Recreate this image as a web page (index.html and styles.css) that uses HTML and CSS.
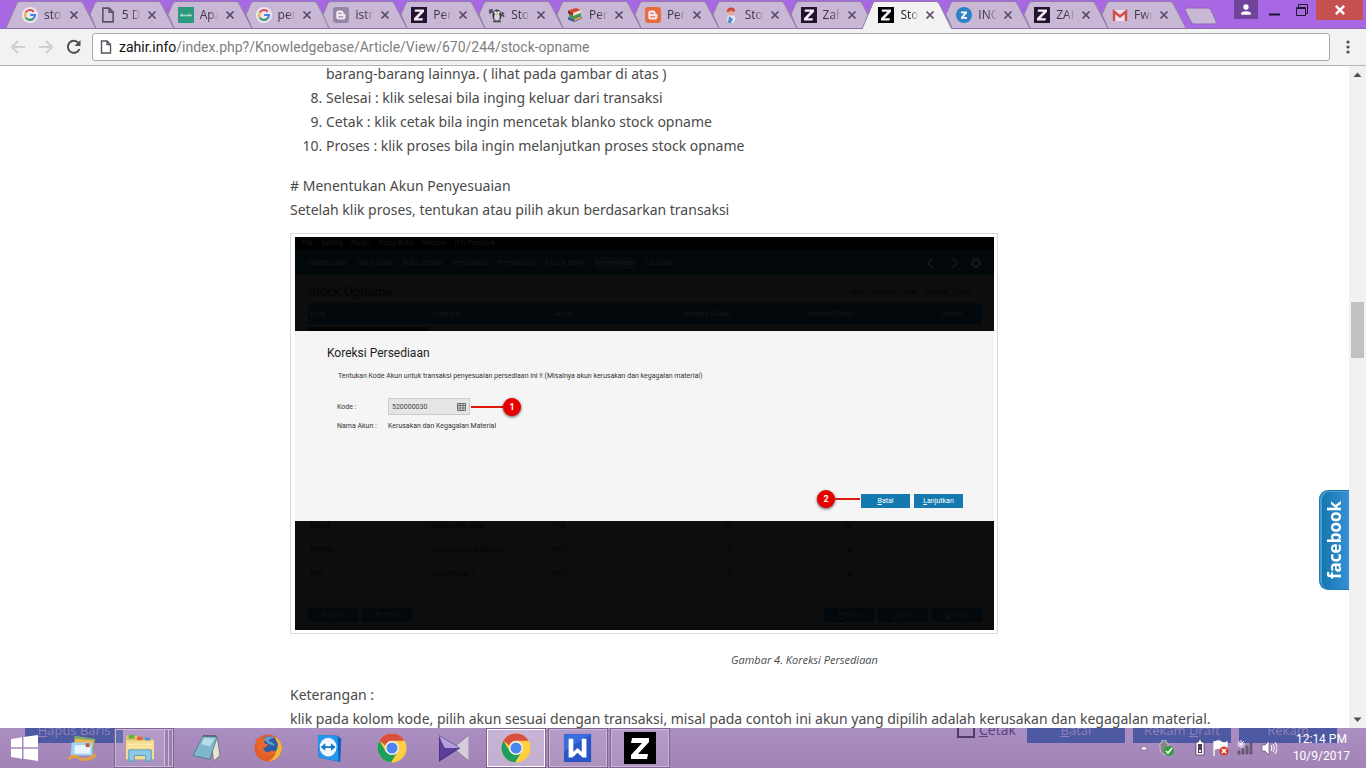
FILE: index.html
```html
<!DOCTYPE html>
<html lang="id">
  <head>
    <meta charset="UTF-8" />
    <meta name="viewport" content="width=device-width, initial-scale=1.0" />
    <title>Stock Opname - Zahir</title>
    <link rel="stylesheet" href="styles.css">
  </head>
  <body>
    <!-- shared icons -->
    <svg class="defs" aria-hidden="true">
      <symbol id="tab-full" viewBox="0 0 90 28" preserveAspectRatio="none"><path d="M0 28L11 3Q12 1.500 14 1.500H74Q76 1.500 77 3L90 28"/></symbol>
      <symbol id="tab-cut" viewBox="0 0 90 28" preserveAspectRatio="none"><path d="M12 28L6 14.500L11 3Q12 1.500 14 1.500H74Q76 1.500 77 3L90 28"/></symbol>
      <symbol id="i-close" viewBox="0 0 10 10"><path d="M1.500 1.500l7 7M8.500 1.500l-7 7" fill="none" stroke="#54496b" stroke-width="1.700"/></symbol>
      <symbol id="i-google" viewBox="0 0 16 16"><circle cx="8" cy="8" r="8" fill="#eee6f4"/><g fill="none" stroke-width="2.200"><path d="M3.700 5.500A5 5 0 0 1 11.800 4.700" stroke="#d9534a"/><path d="M3.700 5.500A5 5 0 0 0 3.700 10.500" stroke="#e8b832"/><path d="M3.700 10.500A5 5 0 0 0 11.300 11.700" stroke="#3d9f65"/><path d="M11.300 11.700A5 5 0 0 0 13 8H8.200" stroke="#4a80dc"/></g></symbol>
      <symbol id="i-page" viewBox="0 0 12 14"><path d="M1.500 1h5.500l3.500 3.500V13h-9zM7 1v3.500h3.500" fill="none" stroke="#5b5360" stroke-width="1.400"/></symbol>
      <symbol id="i-sleekr" viewBox="0 0 16 16"><path d="M0 0h16v16H0z" fill="#2c9a7c"/><path d="M2 8.500h12M4 6.500v3M11 6.500v3" stroke="#a5d8c9" stroke-width="1.300"/></symbol>
      <symbol id="i-blogger" viewBox="0 0 16 16"><rect width="16" height="16" rx="3"/><path d="M5.600 3.500h2.600a2.300 2.300 0 0 1 2.300 2.300c0 1 .4 1.200 1.900 1.200v3a2.500 2.500 0 0 1-2.500 2.500H5.600a2.300 2.300 0 0 1-2.300-2.300V5.800a2.300 2.300 0 0 1 2.300-2.300z" fill="#f3eaf4"/><path d="M5.800 6.300h2.400M5.800 9.800h4" stroke="currentColor" stroke-width="1.300" stroke-linecap="round"/></symbol>
      <symbol id="i-zahir" viewBox="0 0 16 16"><path d="M0 0h16v16H0z"/><path d="M4 2.500h9v2.200L6.700 11.300H12l-.6 2.200H3v-2.200l6.300-6.600H3.600z" fill="#f4edfa"/></symbol>
      <symbol id="i-penguin" viewBox="0 0 16 16"><ellipse cx="8" cy="8.500" rx="4.500" ry="6" fill="#333"/><ellipse cx="8" cy="10" rx="2.800" ry="3.700" fill="#d8d8e0"/><circle cx="6.500" cy="5.500" r="1.300" fill="#fff"/><circle cx="9.500" cy="5.500" r="1.300" fill="#fff"/><path d="M7 7.500h2l-1 1z" fill="#dca032"/><path d="M1 2v5M3 2v4M0 4.500h4M13 5l2 5M12 9l3-3M4 14.500h8" stroke="#4c4553" stroke-width="1.400"/></symbol>
      <symbol id="i-books" viewBox="0 0 16 16"><path d="M1 3.500L9 1l5 2-8 3z" fill="#d8462d"/><path d="M1 3.500L6 6v3L1 6.500z" fill="#8b2b22"/><path d="M6 6l8-3v3L6 9z" fill="#e9e2d0"/><path d="M2 7l4 2 8-3v3l-8 3-4-2z" fill="#3f9b48"/><path d="M1 10l5 2 8-3 1 2.500L7 15l-6-2.500z" fill="#335f9c"/><path d="M7 12l7-2.500v2L7 14z" fill="#e8a83e"/></symbol>
      <symbol id="i-worker" viewBox="0 0 16 16"><path d="M4 4a4 3.500 0 0 1 8 0l-1 1H3.500z" fill="#cf4632"/><ellipse cx="8" cy="6" rx="2.600" ry="2.600" fill="#e3a582"/><path d="M5 8.500h6l1.500 3-2 4.500H6l-2-3z" fill="#e8edf4"/><path d="M6 9l4 3-2 4H5z" fill="#4c8dd0"/></symbol>
      <symbol id="i-ring" viewBox="0 0 16 16"><circle cx="8" cy="8" r="8" fill="#2f82c4"/><path d="M5 4.500h6v1.500L7.500 10H11v1.800H5v-1.500l3.500-4H5z" fill="#fff"/></symbol>
      <symbol id="i-gmail" viewBox="0 0 16 16"><path d="M1 3h14v11H1z" fill="#e9e1ee"/><path d="M2 14V4.500l6 5 6-5V14" fill="none" stroke="#d54b3f" stroke-width="2.400"/></symbol>
      <symbol id="i-chrome" viewBox="0 0 30 30"><circle cx="15" cy="15" r="14.500" fill="#ffcf40"/><path d="M2.400 7.800A14.500 14.500 0 0 1 27.600 7.800H15a7.200 7.200 0 0 0-6.600 4.800z" fill="#d9503f"/><path d="M2.400 7.800A14.500 14.500 0 0 0 14 29.500l6.300-10.300a7.200 7.200 0 0 1-11.500-.6z" fill="#1e9f5e"/><circle cx="15" cy="15" r="7" fill="#f2f2f2"/><circle cx="15" cy="15" r="5.500" fill="#4a86ee"/></symbol>
    </svg>

    <header class="titlebar">
      <nav class="tabs">
        <div class="tab"><svg class="shape"><use href="#tab-full"/></svg><svg class="fav"><use href="#i-google"/></svg><a href="#">sto</a><button aria-label="Close"><svg><use href="#i-close"/></svg></button></div>
        <div class="tab"><svg class="shape"><use href="#tab-cut"/></svg><svg class="fav"><use href="#i-page"/></svg><a href="#">5 D</a><button aria-label="Close"><svg><use href="#i-close"/></svg></button></div>
        <div class="tab"><svg class="shape"><use href="#tab-cut"/></svg><svg class="fav"><use href="#i-sleekr"/></svg><a href="#">Apa</a><button aria-label="Close"><svg><use href="#i-close"/></svg></button></div>
        <div class="tab"><svg class="shape"><use href="#tab-cut"/></svg><svg class="fav"><use href="#i-google"/></svg><a href="#">per</a><button aria-label="Close"><svg><use href="#i-close"/></svg></button></div>
        <div class="tab"><svg class="shape"><use href="#tab-cut"/></svg><svg class="fav grey"><use href="#i-blogger"/></svg><a href="#">istri</a><button aria-label="Close"><svg><use href="#i-close"/></svg></button></div>
        <div class="tab"><svg class="shape"><use href="#tab-cut"/></svg><svg class="fav dark"><use href="#i-zahir"/></svg><a href="#">Per</a><button aria-label="Close"><svg><use href="#i-close"/></svg></button></div>
        <div class="tab"><svg class="shape"><use href="#tab-cut"/></svg><svg class="fav"><use href="#i-penguin"/></svg><a href="#">Sto</a><button aria-label="Close"><svg><use href="#i-close"/></svg></button></div>
        <div class="tab"><svg class="shape"><use href="#tab-cut"/></svg><svg class="fav"><use href="#i-books"/></svg><a href="#">Per</a><button aria-label="Close"><svg><use href="#i-close"/></svg></button></div>
        <div class="tab"><svg class="shape"><use href="#tab-cut"/></svg><svg class="fav orange"><use href="#i-blogger"/></svg><a href="#">Per</a><button aria-label="Close"><svg><use href="#i-close"/></svg></button></div>
        <div class="tab"><svg class="shape"><use href="#tab-cut"/></svg><svg class="fav"><use href="#i-worker"/></svg><a href="#">Sto</a><button aria-label="Close"><svg><use href="#i-close"/></svg></button></div>
        <div class="tab"><svg class="shape"><use href="#tab-cut"/></svg><svg class="fav dark"><use href="#i-zahir"/></svg><a href="#">Zah</a><button aria-label="Close"><svg><use href="#i-close"/></svg></button></div>
        <div class="tab active"><svg class="shape"><use href="#tab-full"/></svg><svg class="fav"><use href="#i-zahir"/></svg><a href="#">Sto</a><button aria-label="Close"><svg><use href="#i-close"/></svg></button></div>
        <div class="tab"><svg class="shape"><use href="#tab-cut"/></svg><svg class="fav"><use href="#i-ring"/></svg><a href="#">INC</a><button aria-label="Close"><svg><use href="#i-close"/></svg></button></div>
        <div class="tab"><svg class="shape"><use href="#tab-cut"/></svg><svg class="fav dark"><use href="#i-zahir"/></svg><a href="#">ZAH</a><button aria-label="Close"><svg><use href="#i-close"/></svg></button></div>
        <div class="tab"><svg class="shape"><use href="#tab-cut"/></svg><svg class="fav"><use href="#i-gmail"/></svg><a href="#">Fwd</a><button aria-label="Close"><svg><use href="#i-close"/></svg></button></div>
      </nav>
      <button class="new-tab" aria-label="New tab"><svg viewBox="0 0 34 18"><path d="M3 1h21q2 0 3 2l5 11q1 3-1 3H10q-2 0-3-2L1 3q-1-2 2-2z" fill="#c8b8d5" stroke="#8a68ad"/></svg></button>
      <div class="window-controls">
        <button class="profile" aria-label="Profile"><svg viewBox="0 0 10 10"><circle cx="5" cy="2.500" r="2.200"/><path d="M1 9V7.500Q1.500 6 5 6t4 1.500V9z"/></svg></button>
        <button class="minimize" aria-label="Minimize"><svg viewBox="0 0 12 12"><path d="M0 10.500h11" stroke="#1f1630" stroke-width="2"/></svg></button>
        <button class="restore" aria-label="Restore"><svg viewBox="0 0 12 12"><path d="M.5 3.500h9v8h-9zM0 4.500h10M2.500 3V.5h9v9H10" fill="none" stroke="#1f1630"/></svg></button>
        <button class="close" aria-label="Close window"><svg viewBox="0 0 10 10"><path d="M1.500 1.500l7 7M8.500 1.500l-7 7" stroke="#fff" stroke-width="2"/></svg></button>
      </div>
    </header>

    <div class="toolbar">
      <button aria-label="Back"><svg viewBox="0 0 16 16"><path d="M15 8H2.500M8 2L2 8l6 6" stroke="#d0d0d0"/></svg></button>
      <button aria-label="Forward"><svg viewBox="0 0 16 16"><path d="M1 8h12.500M8 2l6 6-6 6" stroke="#d0d0d0"/></svg></button>
      <button aria-label="Reload"><svg viewBox="0 0 16 16"><path d="M13.500 10A6 6 0 1 1 12.500 4" stroke="#505050"/><path d="M14.500 1v6h-6z" fill="#505050"/></svg></button>
      <div class="address">
        <svg><use href="#i-page"/></svg>
        <a href="#">zahir.info<span>/index.php?/Knowledgebase/Article/View/670/244/stock-opname</span></a>
      </div>
      <button class="menu" aria-label="Menu"><svg viewBox="0 0 16 16"><circle cx="8" cy="3" r="1.600"/><circle cx="8" cy="8" r="1.600"/><circle cx="8" cy="13" r="1.600"/></svg></button>
    </div>

    <div class="viewport">
      <main>
        <article>
          <ol start="8">
            <li class="continued">barang-barang lainnya. ( lihat pada gambar di atas )</li>
            <li value="8">Selesai : klik selesai bila inging keluar dari transaksi</li>
            <li>Cetak : klik cetak bila ingin mencetak blanko stock opname</li>
            <li>Proses : klik proses bila ingin melanjutkan proses stock opname</li>
          </ol>
          <p># Menentukan Akun Penyesuaian<br>Setelah klik proses, tentukan atau pilih akun berdasarkan transaksi</p>

          <figure>
            <div class="app">
              <div class="app-top">
                <div class="app-menu"><span>File</span><span>Setting</span><span>Plugin</span><span>Tutup Buku</span><span>Window</span><span>[F1] Petunjuk</span></div>
                <div class="app-nav">
                  <span>Dashboard</span><span>Data-Data</span><span>Buku Besar</span><span>Penjualan</span><span>Pembelian</span><span>Kas &amp; Bank</span><span class="current">Persediaan</span><span>Laporan</span>
                  <svg viewBox="0 0 58 12"><path d="M8 1L3 6l5 5M27 1l5 5-5 5" fill="none" stroke="#15191c" stroke-width="1.500"/><circle cx="51" cy="6" r="3.500" fill="none" stroke="#15191c" stroke-width="2"/><circle cx="51" cy="6" r="4.800" fill="none" stroke="#15191c" stroke-dasharray="2 1.800"/></svg>
                </div>
                <div class="app-title"><h2>Stock Opname</h2><div><span>Atas</span><span>Gudang</span><span>Cari</span><span>Update</span><span>Filter</span></div></div>
                <table class="app-head">
                  <tr><th>Kode</th><th>Deskripsi</th><th>Satuan</th><th>Tersedia (Buku)</th><th>Tersedia (Fisik)</th><th>Selisih</th></tr>
                </table>
                <div class="app-cell"></div>
              </div>

              <section class="dialog">
                <h3>Koreksi Persediaan</h3>
                <p>Tentukan Kode Akun untuk transaksi penyesuaian persediaan ini !! (Misalnya akun kerusakan dan kegagalan material)</p>
                <div class="field">
                  <label for="kode">Kode :</label>
                  <div class="kode-box">
                    <input type="text" id="kode" value="520000030">
                    <svg viewBox="0 0 9 8"><path d="M.5.5h8v7h-8zM0 2.500h9M0 5h9M3 0v8M6 0v8" fill="#ddd" stroke="#555" stroke-width=".8"/></svg>
                  </div>
                  <i class="line"></i><b class="marker">1</b>
                </div>
                <div class="field"><span class="name">Nama Akun :</span><span>Kerusakan dan Kegagalan Material</span></div>
                <div class="actions"><b class="marker">2</b><i class="line"></i><button><u>B</u>atal</button><button><u>L</u>anjutkan</button></div>
              </section>

              <div class="app-bottom">
                <table>
                  <tr><td>Kms-5</td><td>Kamus Bhs. Arab</td><td>PCS</td><td>20</td><td>20</td><td></td></tr>
                  <tr><td>PKT-K5</td><td>Paket Kamus 5 Bahasa</td><td>PKT</td><td>0</td><td>0</td><td></td></tr>
                  <tr><td>PP1</td><td>Paket Pintar 1</td><td>PKT</td><td>0</td><td>0</td><td></td></tr>
                </table>
                <div class="app-buttons"><button>Reset =</button><button>Reset 0</button><button class="push"><u>P</u>roses</button><button><u>C</u>etak</button><button><u>S</u>elesai</button></div>
              </div>
            </div>
          </figure>
          <p class="caption">Gambar 4. Koreksi Persediaan</p>

          <p>Keterangan :<br>klik pada kolom kode, pilih akun sesuai dengan transaksi, misal pada contoh ini akun yang dipilih adalah kerusakan dan kegagalan material.</p>
        </article>
        <a class="facebook" href="#"><span>facebook</span></a>
      </main>
      <div class="scrollbar">
        <svg viewBox="0 0 17 17"><path d="M4.500 11l4-4.500 4 4.500z"/></svg>
        <div class="thumb"></div>
        <svg viewBox="0 0 17 17"><path d="M4.500 6.500l4 4.500 4-4.500z"/></svg>
      </div>
    </div>

    <footer class="taskbar">
      <!-- window that shows through the glass -->
      <div class="ghost">
        <span class="ghost-btn"><u>H</u>apus Baris</span>
        <i class="ghost-box"></i><span class="ghost-label"><u>C</u>etak</span>
        <span class="ghost-btn"><u>B</u>atal</span><span class="ghost-btn">Rekam <u>D</u>raft</span><span class="ghost-btn">Reka<u>m</u></span>
      </div>
      <button class="start" aria-label="Start"><svg viewBox="0 0 28 26"><path d="M0 4l11-1.700v10H0zM12.500 2.100L27 0v12.300H12.500zM0 13.700h11v10L0 22zM12.500 13.700H27V26l-14.500-2.200z" fill="#fff"/></svg></button>
      <button class="task" aria-label="Mail"><svg viewBox="0 0 32 30"><path d="M8 2l22 3-3 17-21-4z" fill="#7fa965"/><path d="M9 5l20 2-3 15-19-3z" fill="#edb454"/><path d="M5 9l22 0v14H4z" fill="#9fd3f1"/><path d="M8 12h17v9H8z" fill="#e8f6fc"/><path d="M20 10h4v4h-4z" fill="#c4523b"/><path d="M1 25q7-6 13 0 8 3 16-5l1 4q-9 7-17 4-6-5-11 0z" fill="#e2a144"/></svg></button>
      <button class="task open stack" aria-label="File Explorer"><svg viewBox="0 0 32 30"><path d="M1 2h12l2 3h15v22H1z" fill="#e5bf68"/><path d="M4 1h6v4H4z" fill="#61b239"/><path d="M13 3h6v4h-6z" fill="#e06440"/><path d="M21 4h6v4h-6z" fill="#4b94cf"/><path d="M1 7h30v20H1z" fill="#f6dc92"/><path d="M3 11h26M3 14h26" stroke="#fff0bb"/><path d="M4 29V17h24v12h-6v-6H10v6z" fill="#8fcae4" stroke="#4e9cc2"/></svg></button>
      <button class="task" aria-label="Notepad"><svg viewBox="0 0 32 30"><path d="M21 3l7 1 3 19-7 6z" fill="#e7e3d8" stroke="#7c7768"/><path d="M13 2l15 1-8 24-18-4z" fill="#7fb8cc" stroke="#537c90"/><path d="M14 4l11 1-5 8-9-2z" fill="#b8dce6"/><path d="M13 2h15" stroke="#545454" stroke-width="2" stroke-dasharray="2 1"/></svg></button>
      <button class="task" aria-label="Firefox"><svg viewBox="0 0 32 30"><circle cx="16" cy="15" r="14.500" fill="#e25e28"/><path d="M24 3q8 6 6.500 14.500Q28 28 17 29.500 26 23 25 12z" fill="#f3b639"/><circle cx="17" cy="12" r="9.500" fill="#2f5da4"/><path d="M11 5q6-4 12-1-7 1-6 4 5 0 6 5-3-2-6-2z" fill="#5aa3d6"/><path d="M3 3q1 3 4 3 4-2 7 0-3 2-2 4l4 1q-1 3-5 4 1 5 6 4 5-2 7 0-5 5-12 3Q3 18 3 3z" fill="#e8692b"/></svg></button>
      <button class="task" aria-label="TeamViewer"><svg viewBox="0 0 32 30"><path d="M3 1l21 1 4 3-1 25-23-5z" fill="#1261bb"/><path d="M3 1l21 1 1 27-21-4z" fill="#2396ed"/><ellipse cx="14" cy="14" rx="9" ry="10" fill="#f0f6fb"/><path d="M6 14l5-4v3h6v-3l5 4-5 4v-3h-6v3z" fill="#1778c9"/></svg></button>
      <button class="task" aria-label="Chrome"><svg><use href="#i-chrome"/></svg></button>
      <button class="task" aria-label="KMPlayer"><svg viewBox="0 0 32 30"><path d="M32 1v28L15 15z" fill="#d5ccdc" stroke="#8e819b"/><path d="M0 2l22 13L0 29z" fill="#5b3d9a" stroke="#43297a"/><path d="M0 2l22 13L6 15z" fill="#b4a0da"/></svg></button>
      <button class="task open current" aria-label="Chrome window"><svg><use href="#i-chrome"/></svg></button>
      <button class="task open" aria-label="Writer"><svg viewBox="0 0 32 32"><path d="M1 1h29v30H1z" fill="#2955c6"/><path d="M1 1h29L1 20z" fill="#3a6cde"/><path d="M6 6h5v14l4.500-4 4.500 4V6h5v20h-4l-5.500-5-5.500 5H6z" fill="#fff"/></svg></button>
      <button class="task open" aria-label="Zahir"><svg class="large" viewBox="0 0 32 32"><path d="M0 0h32v32H0z"/><path d="M8 6h17v4L14 22h10l-1 5H7v-4l11-12H7z" fill="#fff"/></svg></button>

      <div class="tray">
        <svg viewBox="0 0 10 16"><path d="M1 10l4-4 4 4z" fill="#fff" stroke="#665375" stroke-width=".6"/></svg>
        <svg class="usb" viewBox="0 0 18 16"><path d="M5 0h4v3h2v6q-1 3-4 6Q3 12 3 9V3h2z" fill="#85858a" stroke="#ddd" stroke-width=".7"/><circle cx="12" cy="11" r="5" fill="#2ea038"/><path d="M9 11l2 2 4-5" fill="none" stroke="#fff" stroke-width="1.600"/></svg>
        <svg viewBox="0 0 10 16"><path d="M3.500 0h3v2H9v13H1V2h2.500z" fill="#fff" stroke="#40304e" stroke-width=".7"/><path d="M3 4h4v9H3z" fill="#4c3b5a"/><path d="M4 10h2v2H4z" fill="#fff"/></svg>
        <svg viewBox="0 0 16 16"><path d="M1 1v15M2 2q4-2 6 0t6 0v8q-4 1-6-1t-6 0z" fill="#fff" stroke="#fff" stroke-width="1.300"/><circle cx="11" cy="11" r="4.600" fill="#d4442c"/><path d="M9 9l4 4M13 9l-4 4" stroke="#fff" stroke-width="1.500"/></svg>
        <svg viewBox="0 0 16 16"><path d="M1 11h2v3H1zM5 9h2v5H5zM9 6h2v8H9zM13 3h2v11h-2z" fill="#746a7d" stroke="#4a3d55" stroke-width=".6"/><path d="M4 0v8M0 4h8M1 1l6 6M7 1L1 7" stroke="#fff"/></svg>
        <svg viewBox="0 0 16 16"><path d="M1 5h3l4-4v14l-4-4H1z" fill="#fff" stroke="#514160" stroke-width=".6"/><path d="M10 5q2 3 0 6M12 4q3 4 0 8M14 2q4 6 0 12" fill="none" stroke="#fff"/></svg>
        <time>12:14 PM<br>10/9/2017</time>
      </div>
    </footer>
  </body>
</html>
```
FILE: styles.css
```css
* {
  margin: 0;
  padding: 0;
  box-sizing: border-box;
}

body {
  display: flex;
  flex-direction: column;
  height: 100vh;
  overflow: hidden;
  background-color: #fff;
  color: #4a4a4a;
  font-family: "Noto Sans", "Open Sans", sans-serif;
  font-size: 14px;
  line-height: 24px;
}

button {
  border: none;
  background: none;
  font-family: inherit;
}

svg {
  display: block;
  flex: none;
}

a {
  color: inherit;
  text-decoration: none;
}

.defs {
  position: absolute;
  width: 0;
  height: 0;
}

/* browser tabs */
.titlebar {
  display: flex;
  flex: none;
  height: 29px;
  padding-left: 6px;
  background-color: #a868e4;
  border-bottom: 1px solid #8c6aae;
}

.tabs {
  display: flex;
  flex: 1;
  min-width: 0;
}

.tab {
  position: relative;
  display: flex;
  align-items: center;
  flex: 1;
  min-width: 0;
  max-width: 200px;
  height: 29px;
  padding: 1px 0 0 16px;
  color: #3c3348;
  font-family: "Open Sans", sans-serif;
  font-size: 12px;
}

.tab .shape {
  position: absolute;
  left: 0;
  top: 0;
  width: calc(100% + 12px);
  height: 28px;
  fill: #c8b8d5;
  stroke: #8f7da3;
}

.tab.active {
  z-index: 1;
  color: #222;
}

.tab.active .shape {
  height: 29px;
  fill: #f2f2f2;
}

.tab .fav {
  position: relative;
  width: 16px;
  height: 16px;
}

.fav.grey {
  color: #9587a3;
  fill: #9587a3;
}

.fav.orange {
  color: #e96d3c;
  fill: #e96d3c;
}

.fav.dark {
  fill: #23132f;
}

.tab a {
  position: relative;
  flex: 1;
  min-width: 0;
  margin-left: 6px;
  overflow: hidden;
  white-space: nowrap;
  mask-image: linear-gradient(to right, #000 50%, transparent);
}

.tab button {
  position: relative;
  width: 10px;
  height: 10px;
  margin: 0 5px 0 6px;
}

.tab button svg {
  width: 10px;
  height: 10px;
}

.new-tab {
  flex: none;
  width: 34px;
  height: 18px;
  margin: 7px 16px 0 10px;
}

.window-controls {
  display: flex;
  flex: none;
  padding-right: 3px;
}

.window-controls button {
  display: flex;
  justify-content: center;
  align-items: center;
  width: 30px;
  height: 20px;
}

.window-controls svg {
  width: 12px;
  height: 12px;
}

.window-controls .profile {
  width: 24px;
  height: 19px;
  background-color: #70449b;
  fill: #fff;
}

.window-controls .minimize {
  width: 26px;
  margin-left: 4px;
}

.window-controls .restore {
  width: 28px;
}

.window-controls .close {
  width: 47px;
  background-color: #c75050;
}

/* address bar */
.toolbar {
  display: flex;
  align-items: center;
  flex: none;
  height: 37px;
  padding: 0 10px;
  gap: 12px;
  background-color: #f2f2f2;
  border-bottom: 1px solid #b6b4b6;
}

.toolbar button svg {
  width: 16px;
  height: 16px;
  fill: none;
  stroke-width: 2;
}

.toolbar .menu {
  margin-left: -2px;
}

.toolbar .menu svg {
  fill: #505050;
}

.address {
  display: flex;
  align-items: center;
  flex: 1;
  height: 28px;
  margin-left: -2px;
  padding-left: 7px;
  gap: 7px;
  background-color: #fff;
  border: 1px solid #a9a9a9;
  border-radius: 3px;
  color: #111;
  font-family: Roboto, sans-serif;
}

.address svg {
  width: 12px;
  height: 14px;
}

.address span {
  color: #808080;
}

/* page */
.viewport {
  display: flex;
  flex: 1;
  min-height: 0;
}

main {
  position: relative;
  flex: 1;
  min-width: 0;
  overflow: hidden;
}

article {
  margin-top: -4px;
  padding: 0 30px 0 290px;
}

ol {
  padding-left: 36px;
  margin-bottom: 16px;
}

li.continued {
  list-style: none;
}

figure {
  max-width: 708px;
  margin-top: 11px;
  padding: 3px 3px 3px 4px;
  border: 1px solid #d9d9dc;
}

.caption {
  margin: 14px 0 11px;
  font-family: "Open Sans", sans-serif;
  font-size: 11px;
  font-style: italic;
  text-align: center;
}

/* application window in the figure */
.app {
  background-color: #0d0d0d;
  color: #020204;
  font-family: Roboto, sans-serif;
  font-size: 7px;
  line-height: 12px;
}

.app-top {
  height: 94px;
}

.app-menu {
  display: flex;
  height: 13px;
  padding-left: 7px;
  gap: 8px;
  background-color: #000;
  color: #161616;
}

.app-nav {
  display: flex;
  align-items: center;
  height: 25px;
  padding: 0 11px 0 13px;
  gap: 10px;
  background-color: #02070a;
  color: #13181b;
  font-size: 8px;
}

.app-nav .current {
  background-color: #070a0c;
}

.app-nav svg {
  width: 58px;
  height: 12px;
  margin-left: auto;
}

.app-title {
  display: flex;
  justify-content: space-between;
  align-items: center;
  height: 28px;
  padding: 6px 23px 0 13px;
}

.app-title h2 {
  font-size: 13px;
  font-weight: 400;
}

.app-title div {
  display: flex;
  gap: 8px;
}

.app table {
  width: calc(100% - 25px);
  margin-left: 13px;
  border-collapse: collapse;
  table-layout: fixed;
}

.app th,
.app td {
  width: 18%;
  padding: 0 2px;
  font-weight: 400;
  text-align: left;
}

.app td {
  height: 24px;
}

.app th:nth-child(3),
.app td:nth-child(3) {
  width: 9%;
}

.app th:nth-child(n + 4),
.app td:nth-child(n + 4) {
  text-align: right;
}

.app th:last-child,
.app td:last-child {
  width: 19%;
  padding-right: 20px;
}

.app-head {
  height: 21px;
  background-color: #02080c;
  color: #14191c;
}

.app-cell {
  width: 121px;
  height: 4px;
  margin: 3px 0 0 13px;
  background-color: #020305;
}

.dialog {
  height: 190px;
  padding: 14px 31px 0 32px;
  background-color: #f5f5f5;
  color: #333;
}

.dialog h3 {
  color: #222;
  font-size: 12px;
  font-weight: 400;
  line-height: 16px;
}

.dialog p {
  margin: 9px 0 16px 11px;
}

.field {
  display: flex;
  align-items: center;
  height: 17px;
  margin: 0 0 5px 10px;
}

.field label,
.field .name {
  width: 51px;
}

.field + .field {
  height: 12px;
}

.kode-box {
  display: flex;
  align-items: center;
  width: 82px;
  height: 17px;
  padding: 0 3px;
  background-color: #e5e5e5;
  border: 1px solid #ccc;
}

.kode-box input {
  flex: 1;
  min-width: 0;
  border: none;
  background: none;
  color: #444;
  font-family: inherit;
  font-size: 7px;
}

.kode-box svg {
  width: 9px;
  height: 8px;
}

.line {
  width: 32px;
  height: 2px;
  margin-left: 1px;
  background-color: #e11b0c;
}

.marker {
  width: 18px;
  height: 18px;
  border-radius: 50%;
  background-color: #e80000;
  box-shadow: 0 1px 3px rgba(0, 0, 0, 0.7);
  color: #fff;
  font-size: 9px;
  line-height: 18px;
  text-align: center;
}

.actions {
  display: flex;
  justify-content: flex-end;
  align-items: center;
  margin-top: 57px;
}

.actions .line {
  width: 25px;
  margin: 0 1px 0 0;
}

.actions button {
  width: 49px;
  height: 14px;
  margin-top: 5px;
  background-color: #1479ae;
  color: #fff;
  font-size: 7px;
}

.actions button + button {
  margin-left: 4px;
}

.app-bottom {
  height: 109px;
  overflow: hidden;
}

.app-bottom table {
  margin-top: -7px;
}

.app-buttons {
  display: flex;
  gap: 4px;
  margin: 22px 12px 0 13px;
}

.app-buttons button {
  width: 50px;
  height: 14px;
  background-color: #02080c;
  color: #12171a;
  font-size: 7px;
}

.app-buttons .push {
  margin-left: auto;
}

.facebook {
  position: absolute;
  right: 0;
  top: 424px;
  display: flex;
  justify-content: center;
  align-items: center;
  width: 30px;
  height: 100px;
  background: linear-gradient(to right, #1175aa, #3790d8);
  border: 1px solid #2479b5;
  border-right: none;
  border-radius: 9px 0 0 9px;
  box-shadow: inset 2px 1px 0 #4a9bd2;
  color: #fff;
  font-family: "Open Sans", sans-serif;
  font-size: 17px;
  font-weight: 700;
}

.facebook span {
  writing-mode: vertical-rl;
  transform: rotate(180deg);
}

.scrollbar {
  display: flex;
  flex-direction: column;
  width: 17px;
  background-color: #f1f1f1;
}

.scrollbar svg {
  width: 17px;
  height: 17px;
  fill: #505050;
}

.thumb {
  height: 56px;
  margin: 219px 2px auto;
  background-color: #c1c1c1;
}

/* taskbar */
.taskbar {
  position: relative;
  display: flex;
  flex: none;
  height: 40px;
  overflow: hidden;
  gap: 2px;
  background: linear-gradient(#ab8ec2, #a284b6);
}

.ghost {
  position: absolute;
  left: 25px;
  right: 29px;
  top: -10px;
  display: flex;
  gap: 8px;
  height: 25px;
  color: #5b407c;
  font-family: "Open Sans", sans-serif;
  font-size: 13px;
}

.ghost-btn {
  width: 98px;
  height: 25px;
  background-color: #4d59a2;
  color: #8f80b8;
  text-align: center;
}

.ghost-box {
  width: 18px;
  height: 18px;
  margin: 2px -4px 0 auto;
  border: 2px solid #513b6b;
}

.ghost-label {
  width: 40px;
  font-size: 14px;
}

.taskbar button {
  position: relative;
  display: flex;
  justify-content: center;
  align-items: center;
  flex: none;
}

.start {
  width: 50px;
}

.start svg {
  width: 28px;
  height: 26px;
}

.task {
  width: 60px;
}

.task svg {
  width: 30px;
  height: 30px;
}

.task .large {
  width: 32px;
  height: 32px;
}

.task.open {
  background-color: rgba(255, 255, 255, 0.12);
  border: 1px solid #7c648f;
  box-shadow: inset 0 0 0 1px #c9b9d6;
}

.task.current {
  background-color: rgba(255, 255, 255, 0.35);
  box-shadow: inset 0 0 0 1px #fff;
}

.task.stack {
  padding-right: 8px;
  box-shadow: inset 0 0 0 1px #c9b9d6, inset -4px 0 0 #9b80af, inset -5px 0 0 #d0c0db, inset -8px 0 0 #9b80af, inset -9px 0 0 #d0c0db;
}

.tray {
  position: relative;
  display: flex;
  align-items: center;
  gap: 8px;
  margin-left: auto;
  padding-right: 16px;
}

.tray svg {
  width: 16px;
  height: 16px;
}

.tray svg[viewBox="0 0 10 16"] {
  width: 10px;
}

.tray .usb {
  width: 18px;
  margin-right: 12px;
}

.tray time {
  margin-left: 8px;
  color: #fff;
  font-family: Roboto, sans-serif;
  font-size: 12px;
  line-height: 17px;
  text-align: center;
}
```
